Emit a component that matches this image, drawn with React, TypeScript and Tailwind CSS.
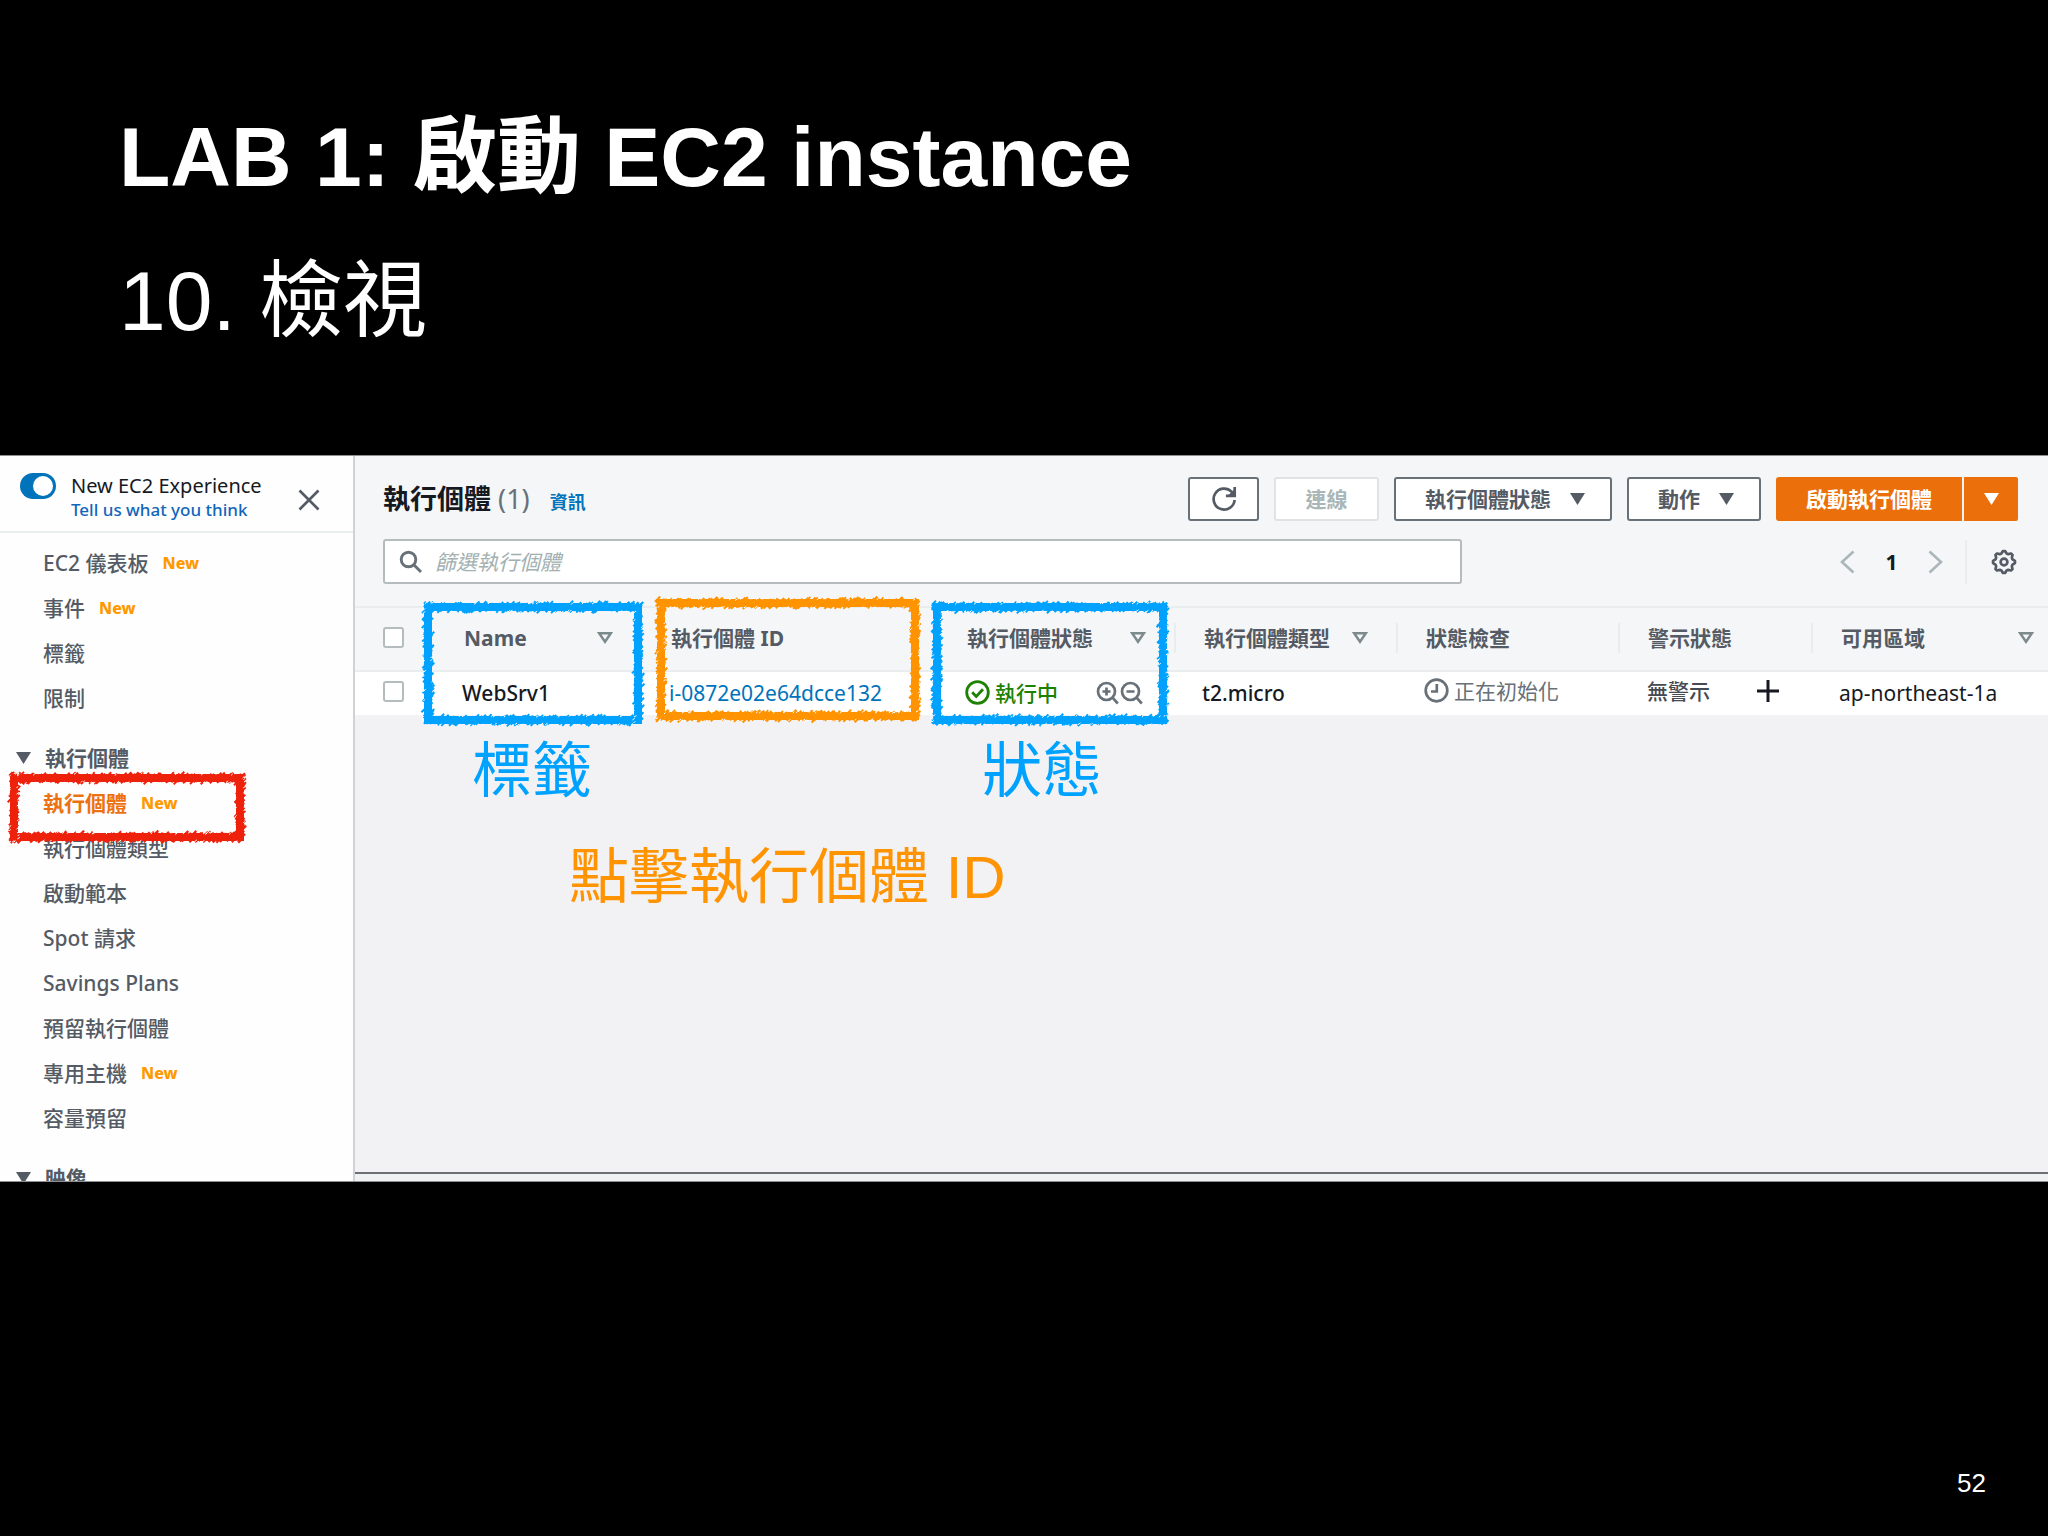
import React from "react";

const UI_FONT = "font-['Noto_Sans','Noto_Sans_CJK_TC',sans-serif]";
const SLIDE_FONT = "font-['Liberation_Sans','Noto_Sans_CJK_TC',sans-serif]";

/* Chalk frame: a solid band with short slanted bristles along both edges. */
function makeRandom(seed: number) {
  let s = seed;
  return () => {
    s = (s * 16807) % 2147483647;
    return s / 2147483647;
  };
}

function chalkPaths(w: number, h: number, seed: number) {
  const rnd = makeRandom(seed);
  let paint = "";
  let scratch = "";
  const inset = 5;
  const sides = [
    { x: inset, y: inset, dx: 1, dy: 0, len: w - inset * 2 },
    { x: inset, y: h - inset, dx: 1, dy: 0, len: w - inset * 2 },
    { x: inset, y: inset, dx: 0, dy: 1, len: h - inset * 2 },
    { x: w - inset, y: inset, dx: 0, dy: 1, len: h - inset * 2 },
  ];
  for (const side of sides) {
    for (let t = -3; t < side.len + 3; t += 1) {
      const off = (rnd() - 0.5) * 8.5;
      const cx = side.x + side.dx * t + side.dy * off;
      const cy = side.y + side.dy * t + side.dx * off;
      const r = 1 + rnd() * 1.4;
      paint += `M${(cx - r).toFixed(1)} ${(cy + r).toFixed(1)}L${(cx + r).toFixed(1)} ${(cy - r).toFixed(1)}`;
      if (rnd() < 0.16) {
        const o2 = (rnd() < 0.5 ? -1 : 1) * (3.4 + rnd() * 1.6);
        const sx = side.x + side.dx * t + side.dy * o2;
        const sy = side.y + side.dy * t + side.dx * o2;
        scratch += `M${(sx - 1).toFixed(1)} ${(sy + 1).toFixed(1)}l${(1 + rnd() * 1.5).toFixed(1)} -1.6`;
      }
    }
  }
  return { paint, scratch };
}

function ChalkFrame({ w, h, seed, className }: { w: number; h: number; seed: number; className: string }) {
  const { paint, scratch } = chalkPaths(w, h, seed);
  return (
    <svg
      width={w}
      height={h}
      viewBox={`0 0 ${w} ${h}`}
      className={`pointer-events-none absolute overflow-visible ${className}`}
      fill="none"
      aria-hidden="true"
    >
      <rect x="5" y="5" width={w - 10} height={h - 10} stroke="currentColor" strokeWidth="8" />
      <path d={paint} stroke="currentColor" strokeWidth="2" />
      <path d={scratch} stroke="#fff" strokeWidth="1" />
    </svg>
  );
}

function Caret() {
  return (
    <svg width="15" height="12" viewBox="0 0 15 12" fill="currentColor" aria-hidden="true">
      <path d="M0 0h15L7.500 12z" />
    </svg>
  );
}

function SortIcon() {
  return (
    <svg width="16" height="12" viewBox="0 0 16 12" fill="none" stroke="#7d8a8b" strokeWidth="2.400" aria-hidden="true">
      <path d="M2.200 1.300h11.600L8 9.800z" />
    </svg>
  );
}

function SearchIcon() {
  return (
    <svg width="24" height="24" viewBox="0 0 24 24" fill="none" stroke="#687078" strokeWidth="2.900" aria-hidden="true">
      <circle cx="9.500" cy="9.500" r="7.300" />
      <path d="M14.800 14.800L22 22" />
    </svg>
  );
}

function ZoomIcon({ plus }: { plus?: boolean }) {
  return (
    <svg width="23" height="24" viewBox="0 0 23 24" fill="none" stroke="#687078" strokeWidth="2.700" aria-hidden="true">
      <circle cx="10.500" cy="10.500" r="8.500" />
      <path d="M16.300 16.300L21.800 22.500M6.500 10.500h8" />
      {plus && <path d="M10.500 6.500v8" />}
    </svg>
  );
}

function RefreshIcon() {
  return (
    <svg width="26" height="26" viewBox="0 0 26 26" fill="none" stroke="#545b64" strokeWidth="2.700" aria-hidden="true">
      <path d="M23.600 14A10.500 10.500 0 1 1 20.500 5.600L23 8.500" />
      <path d="M23.700 1v8.800h-8.800" />
      <path d="M23.700 3v6.800h-7z" fill="#545b64" stroke="none" />
    </svg>
  );
}

function GearIcon() {
  const pts: string[] = [];
  const teeth = 8;
  for (let i = 0; i < teeth * 4; i++) {
    const r = i % 4 < 2 ? 11 : 8.9;
    const a = ((i - 0.5) / (teeth * 4)) * Math.PI * 2 - Math.PI / 2;
    pts.push(`${(13 + r * Math.cos(a)).toFixed(2)},${(13 + r * Math.sin(a)).toFixed(2)}`);
  }
  return (
    <svg width="26" height="26" viewBox="0 0 26 26" fill="none" stroke="#545b64" strokeWidth="2.700" aria-hidden="true">
      <polygon points={pts.join(" ")} strokeLinejoin="round" />
      <circle cx="13" cy="13" r="3.400" />
    </svg>
  );
}

type NavEntry = { label: string; isNew?: boolean; active?: boolean };

const topNav: NavEntry[] = [
  { label: "EC2 儀表板", isNew: true },
  { label: "事件", isNew: true },
  { label: "標籤" },
  { label: "限制" },
];

const instanceNav: NavEntry[] = [
  { label: "執行個體", isNew: true, active: true },
  { label: "執行個體類型" },
  { label: "啟動範本" },
  { label: "Spot 請求" },
  { label: "Savings Plans" },
  { label: "預留執行個體" },
  { label: "專用主機", isNew: true },
  { label: "容量預留" },
];

function NavList({ items }: { items: NavEntry[] }) {
  return (
    <ul>
      {items.map((it) => (
        <li key={it.label} className="flex h-[45px] items-center gap-[14px] pl-[43px]">
          <a href="#" className={it.active ? "font-bold text-[#ec7211]" : "text-[#545b64]"}>
            {it.label}
          </a>
          {it.isNew && <span className="text-[16px] font-extrabold text-[#ff9900]">New</span>}
        </li>
      ))}
    </ul>
  );
}

function NavGroup({ label }: { label: string }) {
  return (
    <button type="button" className="mt-[15px] flex h-[45px] items-center gap-[14px] pl-4 font-bold text-[#545b64]">
      <Caret />
      {label}
    </button>
  );
}

function Sidebar() {
  return (
    <aside className="w-[355px] shrink-0 border-r-2 border-[#d0d3d6] bg-[#fefefe]">
      <div className="flex h-[77px] border-b-2 border-[#eaeded] pl-5">
        <label className="flex cursor-pointer pt-[17px]">
          <input type="checkbox" defaultChecked className="peer sr-only" aria-label="New EC2 Experience" />
          <span className="flex h-[26px] w-9 justify-end rounded-full bg-[#0073bb] p-[3px]">
            <span className="size-[20px] rounded-full bg-white" />
          </span>
        </label>
        <div className="ml-[15px] flex flex-col pt-[17px]">
          <span className="text-[20px] leading-[26px] text-[#16191f]">New EC2 Experience</span>
          <a href="#" className="text-[17px] leading-[22px] font-medium text-[#1166bb]">
            Tell us what you think
          </a>
        </div>
        <button type="button" aria-label="Close" className="mr-[33px] ml-auto pt-[12px] text-[#545b64]">
          <svg width="22" height="22" viewBox="0 0 22 22" fill="none" stroke="currentColor" strokeWidth="2.700">
            <path d="M1.500 1.500l19 19M20.500 1.500l-19 19" />
          </svg>
        </button>
      </div>
      <nav className="pt-[7px] font-medium">
        <NavList items={topNav} />
        <NavGroup label="執行個體" />
        <NavList items={instanceNav} />
        <NavGroup label="映像" />
      </nav>
    </aside>
  );
}

const btn =
  "flex h-[44px] items-center justify-center rounded-[3px] border-2 border-[#687078] bg-white font-bold text-[#545b64]";

function Toolbar() {
  return (
    <div className="flex items-center justify-between">
      <div className="flex items-baseline">
        <h2 className="text-[27px] leading-[44px] font-bold text-[#16191f]">
          執行個體 <span className="font-normal text-[#687078]">(1)</span>
        </h2>
        <a href="#" className="ml-5 text-[18px] font-bold text-[#0073bb]">
          資訊
        </a>
      </div>
      <div className="flex gap-[15px]">
        <button type="button" aria-label="Refresh" className={`${btn} w-[71px]`}>
          <RefreshIcon />
        </button>
        <button
          type="button"
          disabled
          className="h-[44px] w-[105px] rounded-[3px] border-2 border-[#dfe3e4] bg-white font-bold text-[#aab7b8]"
        >
          連線
        </button>
        <button type="button" className={`${btn} gap-[19px] pr-[25px] pl-[29px]`}>
          執行個體狀態
          <Caret />
        </button>
        <button type="button" className={`${btn} gap-[19px] pr-[25px] pl-[29px]`}>
          動作
          <Caret />
        </button>
        <div className="flex gap-[2px] font-bold text-white">
          <button type="button" className="h-[44px] rounded-l-[3px] bg-[#eb6f0a] px-[30px]">
            啟動執行個體
          </button>
          <button
            type="button"
            aria-label="More launch options"
            className="flex h-[44px] w-[54px] items-center justify-center rounded-r-[2px] bg-[#eb6f0a]"
          >
            <Caret />
          </button>
        </div>
      </div>
    </div>
  );
}

function FilterBar() {
  return (
    <div className="mt-[18px] flex items-center justify-between">
      <label className="flex h-[45px] w-[66%] items-center gap-[12px] rounded-[3px] border-2 border-[#b4bcbe] bg-white pl-[14px]">
        <SearchIcon />
        <input
          type="text"
          aria-label="篩選執行個體"
          placeholder="篩選執行個體"
          className="min-w-0 flex-1 bg-transparent italic outline-none placeholder:text-[#a3b0b1]"
        />
      </label>
      <div className="flex items-center">
        <button type="button" aria-label="Previous page" className="text-[#aab7b8]">
          <svg width="15" height="24" viewBox="0 0 15 24" fill="none" stroke="currentColor" strokeWidth="2.600">
            <path d="M13.500 1.500L2 12l11.500 10.500" />
          </svg>
        </button>
        <span className="w-[73px] text-center font-bold text-[#16191f]">1</span>
        <button type="button" aria-label="Next page" className="text-[#aab7b8]">
          <svg width="15" height="24" viewBox="0 0 15 24" fill="none" stroke="currentColor" strokeWidth="2.600">
            <path d="M1.500 1.500L13 12L1.500 22.500" />
          </svg>
        </button>
        <span className="ml-[22px] h-[44px] w-[2px] bg-[#eaeded]" />
        <button type="button" aria-label="Preferences" className="mr-[1px] ml-6">
          <GearIcon />
        </button>
      </div>
    </div>
  );
}

type Column = { label: string; sort?: string; divider?: boolean };

const columns: Column[] = [
  { label: "Name", sort: "mr-[28px]" },
  { label: "執行個體 ID", divider: true },
  { label: "執行個體狀態", sort: "mr-[28px]", divider: true },
  { label: "執行個體類型", sort: "mr-[28px]", divider: true },
  { label: "狀態檢查", divider: true },
  { label: "警示狀態", divider: true },
  { label: "可用區域", sort: "mr-[14px]", divider: true },
];

const box = "block size-[21px] appearance-none rounded-[3px] border-2 border-[#b4bcbe] bg-white";

function InstanceTable() {
  return (
    <table className="mt-[22px] w-full table-fixed border-collapse text-left">
      <colgroup>
        <col className="w-[79px]" />
        <col className="w-[207px]" />
        <col className="w-[296px]" />
        <col className="w-[237px]" />
        <col className="w-[222px]" />
        <col className="w-[222px]" />
        <col className="w-[193px]" />
        <col />
      </colgroup>
      <thead>
        <tr className="h-[64px] border-y-2 border-[#eaeded]">
          <th scope="col" className="p-0 pb-1 pl-[28px]">
            <input type="checkbox" aria-label="Select all" className={box} />
          </th>
          {columns.map((c) => (
            <th key={c.label} scope="col" className="p-0 pb-[2px] font-bold text-[#545b64]">
              <div
                className={`flex h-[30px] items-center justify-between border-l-2 pl-[28px] ${
                  c.divider ? "border-[#eaeded]" : "border-transparent"
                }`}
              >
                {c.label}
                {c.sort && (
                  <span className={c.sort}>
                    <SortIcon />
                  </span>
                )}
              </div>
            </th>
          ))}
        </tr>
      </thead>
      <tbody>
        <tr className="h-[44px] bg-white font-medium text-[#16191f]">
          <td className="p-0 pb-1 pl-[28px]">
            <input type="checkbox" aria-label="Select WebSrv1" className={box} />
          </td>
          <td className="p-0 pb-[2px] pl-[28px]">WebSrv1</td>
          <td className="p-0 pb-[2px] pl-[28px] font-normal">
            <a href="#" className="text-[#0073bb]">
              i-0872e02e64dcce132
            </a>
          </td>
          <td className="p-0 pb-[2px] pl-[28px]">
            <div className="flex items-center text-[#1d8102]">
              <svg width="25" height="25" viewBox="0 0 25 25" fill="none" stroke="currentColor" strokeWidth="2.800" aria-hidden="true">
                <circle cx="12.500" cy="12.500" r="10.800" />
                <path d="M7.200 12.300l4 4.200 6.800-7.200" />
              </svg>
              <span className="ml-[5px]">執行中</span>
              <button type="button" aria-label="Filter in" className="ml-auto">
                <ZoomIcon plus />
              </button>
              <button type="button" aria-label="Filter out" className="mr-[31px] ml-[1px]">
                <ZoomIcon />
              </button>
            </div>
          </td>
          <td className="p-0 pb-[2px] pl-[28px]">t2.micro</td>
          <td className="p-0 pb-[2px] pl-[28px] font-normal">
            <div className="flex items-center gap-[5px] pb-1 text-[#687078]">
              <svg width="25" height="25" viewBox="0 0 25 25" fill="none" stroke="currentColor" strokeWidth="2.700" aria-hidden="true">
                <circle cx="12.500" cy="12.500" r="10.800" />
                <path d="M12.800 6v7.500H7" />
              </svg>
              正在初始化
            </div>
          </td>
          <td className="p-0 pb-[2px] pl-[29px]">
            <div className="flex items-center justify-between pr-[32px] pb-1 text-[#444a52]">
              無警示
              <button type="button" aria-label="Add alarm">
                <svg width="22" height="22" viewBox="0 0 22 22" stroke="#16191f" strokeWidth="3">
                  <path d="M11 0v22M0 11h22" />
                </svg>
              </button>
            </div>
          </td>
          <td className="p-0 pb-[2px] pl-[28px] font-normal">ap-northeast-1a</td>
        </tr>
      </tbody>
    </table>
  );
}

function Console() {
  return (
    <section
      className={`relative flex h-[727px] overflow-hidden border-t border-b border-[#8d9092] text-[21px] leading-[30px] ${UI_FONT}`}
    >
      <Sidebar />
      <main className="flex min-w-0 flex-1 flex-col bg-[#f2f1f4]">
        <div className="bg-[#f5f6f8]">
          <div className="pt-[21px] pr-[30px] pl-[28px]">
            <Toolbar />
            <FilterBar />
          </div>
          <InstanceTable />
        </div>
        <div className="mt-auto h-[9px] border-t-2 border-[#6c7073] bg-[#f0f1f3]" />
      </main>

      <ChalkFrame w={236} h={69} seed={11} className="top-[317px] left-[9px] text-[#ee220c]" />
      <ChalkFrame w={220} h={123} seed={23} className="top-[146px] left-[423px] text-[#00a2ff]" />
      <ChalkFrame w={264} h={123} seed={37} className="top-[142px] left-[656px] text-[#ff9300]" />
      <ChalkFrame w={236} h={123} seed={51} className="top-[146px] left-[932px] text-[#00a2ff]" />

      <div className={`text-[60px] leading-[72px] whitespace-nowrap ${SLIDE_FONT}`}>
        <p className="absolute top-[280px] left-[472px] text-[#00a2ff]">標籤</p>
        <p className="absolute top-[280px] left-[982px] text-[#00a2ff]">狀態</p>
        <p className="absolute top-[386px] left-[569px] text-[#ff9300]">點擊執行個體 ID</p>
      </div>
    </section>
  );
}

export default function App() {
  return (
    <div className="flex min-h-screen flex-col bg-black" lang="zh-Hant">
      <header className={`px-[119px] pt-[85px] pb-[82px] text-[84px] leading-[144px] text-white ${SLIDE_FONT}`}>
        <h1 className="font-bold">LAB 1: 啟動 EC2 instance</h1>
        <p>10. 檢視</p>
      </header>
      <Console />
      <footer className={`mt-auto pr-[62px] pb-[37px] text-right text-[26px] leading-[32px] text-white ${SLIDE_FONT}`}>
        52
      </footer>
    </div>
  );
}
